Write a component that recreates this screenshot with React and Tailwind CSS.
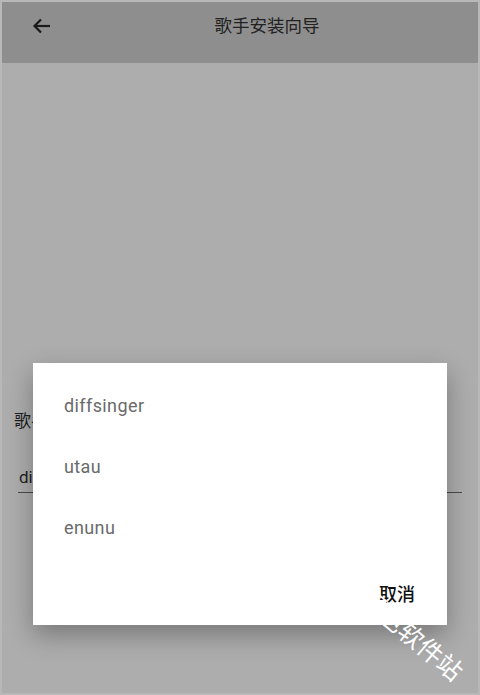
import React from "react";

const font = { fontFamily: "Roboto, 'Noto Sans CJK SC', sans-serif" };

const options = ["diffsinger", "utau", "enunu"];

export default function App() {
  return (
    <div
      className="relative w-[480px] h-[695px] overflow-hidden bg-[#adadad] border-2 border-[#b8b8b8] flex flex-col"
      style={font}
    >
      {/* toolbar */}
      <div className="h-[61px] bg-[#8e8e8e] flex items-start pt-[12px] shrink-0">
        <div className="w-[74px] pl-[28px] flex items-center h-[24px]">
          <svg width="24" height="24" viewBox="0 0 24 24" fill="none" stroke="#1a1a1a" strokeWidth="2.2">
            <path d="M20 12H5" />
            <path d="M11 5.5 4.5 12l6.5 6.5" />
          </svg>
        </div>
        <div className="flex-1 text-center text-[17.5px] leading-[24px] text-[#222] pr-[20px]">歌手安装向导</div>
      </div>

      {/* page content behind dialog */}
      <div className="flex-1 flex flex-col pl-[12px] pr-[16px] pt-[346px]">
        <div className="text-[17px] text-[#1e1e1e]">歌手类型</div>
        <div className="ml-[4px] mt-[30px] text-[17px] text-[#1e1e1e] pl-[1px] pb-[2px] border-b border-[#4a4a4a]">
          diffsinger
        </div>
      </div>

      {/* dialog */}
      <div className="absolute left-[31px] top-[361px] w-[414px] h-[262px] bg-white shadow-[0_10px_24px_rgba(0,0,0,0.3)] flex flex-col">
        <div className="flex flex-col pt-[12px]">
          {options.map((o) => (
            <div key={o} className="h-[61px] pl-[31px] flex items-center text-[18px] text-[#6a6a6a] tracking-[0.4px]">
              {o}
            </div>
          ))}
        </div>
        <div className="flex-1 flex justify-end items-start pr-[32px] pt-[23px]">
          <span className="text-[18px] font-medium text-[#111]">取消</span>
        </div>
      </div>

      {/* watermark */}
      <div className="absolute left-[361px] top-[581px] rotate-[40deg] origin-left text-white text-[25px] leading-none whitespace-nowrap">
        绿色软件站
      </div>
    </div>
  );
}
